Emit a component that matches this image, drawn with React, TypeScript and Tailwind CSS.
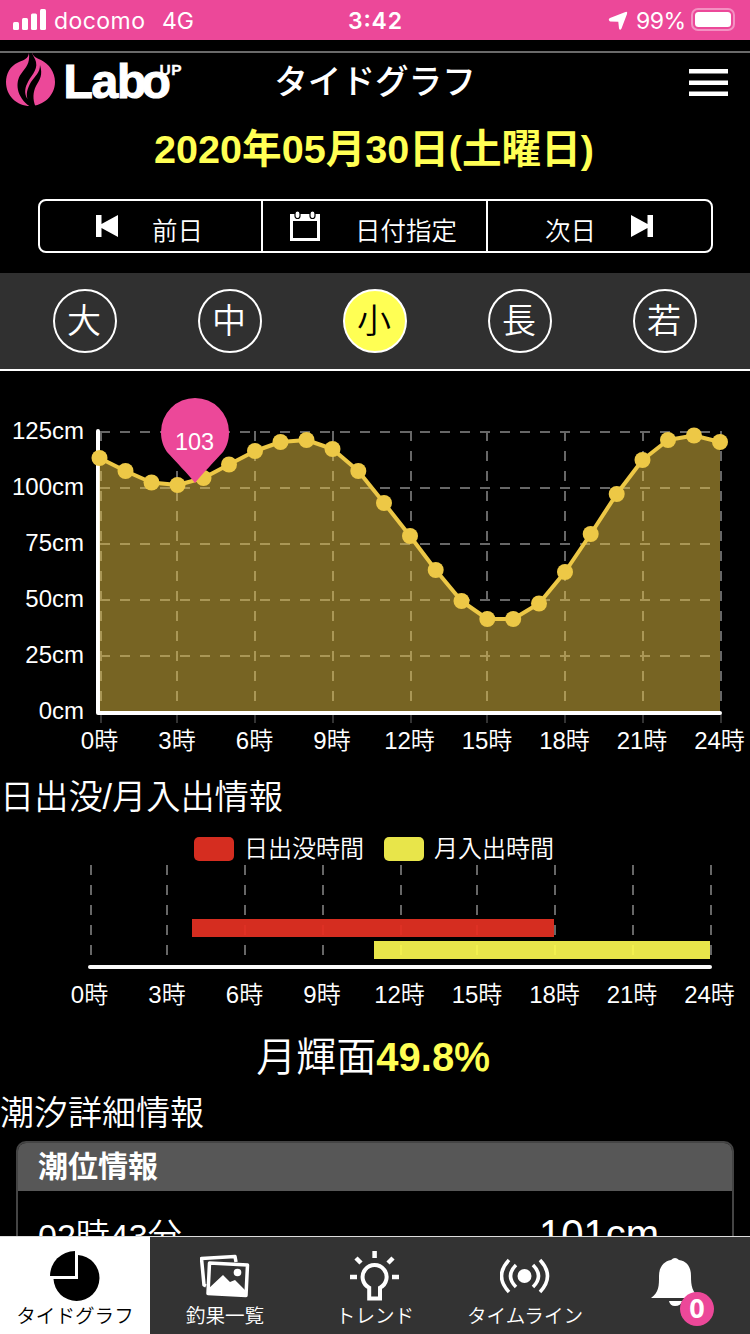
import React from "react";

const JP = "font-['Liberation_Sans','Noto_Sans_CJK_JP',sans-serif]";
const svgFont = "font-['Liberation_Sans','Noto_Sans_CJK_JP',sans-serif] font-[350]";

const tides: [number, number][] = [
  [99.5, 458], [125.5, 471], [151.5, 482.5], [177.5, 485], [203.5, 478], [229, 464.5], [255, 451], [280.5, 442], [306.5, 440],
  [332.5, 449], [358.3, 471], [384, 503], [410, 536], [435.7, 570], [461.5, 601], [487.3, 619], [513.2, 619],
  [539, 603.5], [565, 572], [590.7, 534], [616.7, 494], [642.5, 460], [668, 440], [694, 435.5], [720, 442],
];
const line = tides.map(([x, y]) => `${x},${y}`).join(" ");
const hours = [0, 3, 6, 9, 12, 15, 18, 21, 24];
const gridX = [101, 177, 255, 333, 411, 487, 565, 643, 721];
const gridX2 = [91, 167, 245, 323, 401, 477, 555, 633, 711];
const levels = [125, 100, 75, 50, 25, 0];

function StatusBar() {
  return (
    <div className="flex h-10 items-center bg-[#ec4899] px-[13px] font-['Inter','Roboto',sans-serif] text-white">
      <svg className="h-[22px] w-[33px]" viewBox="0 0 33 22" fill="white">
        <rect x="0" y="13" width="6" height="8" rx="1.5" />
        <rect x="9" y="9" width="6" height="12" rx="1.5" />
        <rect x="18" y="4.5" width="6" height="16.5" rx="1.5" />
        <rect x="27" y="0" width="6" height="21" rx="1.5" />
      </svg>
      <svg className="h-10 w-[691px]" viewBox="46 0 691 40" fill="white">
        <text x="54" y="28.5" fontSize="23" textLength="91">docomo</text>
        <text x="162" y="28.5" fontSize="23" textLength="32">4G</text>
        <text x="348" y="28.5" fontSize="23" fontWeight="600" textLength="54">3:42</text>
        <path d="M610 21.500Q607.500 19.500 610 18L624.800 12.200Q628 11 627 14L621.500 28.500Q620 31 619 28.500L618.300 21.800Z" />
        <text x="636" y="28.5" fontSize="23" textLength="50">99%</text>
        <rect x="692" y="9" width="42" height="21" rx="6" fill="none" stroke="white" strokeOpacity=".4" strokeWidth="2" />
        <rect x="695" y="12" width="36" height="15" rx="3.5" />
        <path d="M737 15v8q2-4 0-8" opacity=".5" />
      </svg>
    </div>
  );
}

function Header() {
  return (
    <header className="mt-[11px] flex h-[65px] items-start border-t-2 border-[#6a6a6a]">
      <svg className="h-[63px] w-[190px] shrink-0" viewBox="0 53 190 63">
        <path fill="#ec4899" d="M29 53C28 59 24 60 18 62.500C10 66 6 74 6 82C6 96 17 106 30 106C44 106 55 95 55 82C55 72 49 64 41 60C36 58 33 56 32 53Z" />
        <path d="M29 53C30 64 26 67 21 74C15 82 16 97 30 106.500H35.500C32.500 99 33 92 36 86C40 79 43 75 40 65C40 73 35 76 31 82C27 89 26 94 27.500 99C24 94 25 88 27 84C30 76 38 71 36 62C35 58 33 56 32 53Z" fill="black" />
        <g fill="white" stroke="white" className="font-['Liberation_Sans'] font-bold">
          <text x="63.5 91.5 117 141.5" y="98" fontSize="48" strokeWidth="1.2">Labo</text>
          <text x="159.5" y="74.5" fontSize="15.5" textLength="22" strokeWidth=".3">UP</text>
        </g>
      </svg>
      <h1 className="-mt-px w-[370px] text-center font-['Noto_Sans_CJK_JP',sans-serif] text-[33.6px] leading-[56px] font-medium">タイドグラフ</h1>
      <svg className="mt-4 ml-[129px] h-[28px] w-[39px]" viewBox="0 0 39 28" fill="white">
        <path d="M0 0h39v4.500H0zM0 11.500h39v4.500H0zM0 22.500h39v4.500H0z" />
      </svg>
    </header>
  );
}

function DayNav() {
  return (
    <nav className="mr-[37px] ml-[38px] mt-[23px] flex h-[54px] rounded-[8px] border-2 border-white text-[25.5px] font-[350]">
      <button className="flex w-[223px] shrink-0 items-center border-r-2 border-white pl-14">
        <svg className="h-[22px] w-[22px]" viewBox="0 0 22 22" fill="white"><path d="M0 0h5.500v9L22 0v22L5.500 13v9H0z" /></svg>
        <span className="ml-[34px] mt-[11px]">前日</span>
      </button>
      <button className="flex w-[225px] shrink-0 items-center border-r-2 border-white pl-[26px]">
        <svg className="h-[32px] w-[32px]" viewBox="0 0 32 32">
          <path fill="white" fillRule="evenodd" d="M1 4h30v27H1zM4 11v17h24V11z" />
          <g fill="white" stroke="black" strokeWidth="1.2"><rect x="6" y="1" width="5" height="7.5" rx="2.5" /><rect x="21" y="1" width="5" height="7.5" rx="2.5" /></g>
        </svg>
        <span className="ml-[34px] mt-[11px]">日付指定</span>
      </button>
      <button className="flex flex-1 items-center pl-[57px]">
        <span className="mt-[11px]">次日</span>
        <svg className="ml-[35px] h-[22px] w-[22px]" viewBox="0 0 22 22" fill="white"><path d="M0 0l16.500 9V0H22v22h-5.500v-9L0 22z" /></svg>
      </button>
    </nav>
  );
}

function TideTypes() {
  return (
    <div className="mt-5 flex h-[98px] items-start gap-[81px] border-b-2 border-white bg-[#303030] pt-4 pl-[53px]">
      {["大", "中", "小", "長", "若"].map((name) => (
        <div key={name} className={`flex h-16 w-16 items-center justify-center rounded-full border-2 border-white text-[34px] leading-[60px] font-[350] ${name === "小" ? "bg-[#ffff54] text-black" : "text-white"}`}>
          <span className="-ml-0.5">{name}</span>
        </div>
      ))}
    </div>
  );
}

function TideChart() {
  return (
    <svg className={`block h-[397px] w-[750px] ${svgFont}`} viewBox="0 371 750 397">
      <g stroke="#676767" strokeWidth="2">
        {levels.slice(0, 5).map((v, i) => <path key={v} d={`M100 ${432 + i * 56}H720`} strokeDasharray="10" />)}
        {gridX.map((x) => <path key={x} d={`M${x} 431V711`} strokeDasharray="10" />)}
        {gridX.map((x) => <path key={x} d={`M${x} 714V723`} stroke="#333" />)}
      </g>
      <path d="M98 431V713M98 713H720" stroke="white" strokeWidth="4" strokeLinecap="round" />
      <polygon points={`${line} 720,711 100,711`} fill="#edc846" fillOpacity=".5" />
      <polyline points={line} fill="none" stroke="#edc846" strokeWidth="4" strokeLinejoin="round" />
      {tides.map(([x, y]) => <circle key={x} cx={x} cy={y} r="8" fill="#edc846" />)}
      <path fill="#ec4899" d="M195 483C188 474 176 462 167 452C163 446 161 440 161 432A34 34 0 0 1 229 432C229 440 227 446 223 452C214 462 202 474 195 483Z" />
      <g fill="white" fontSize="24">
        <text x="194.5" y="450" textAnchor="middle" fontSize="23.5">103</text>
        {levels.map((v, i) => <text key={v} x="84" y={439 + i * 56} textAnchor="end">{v}cm</text>)}
        {hours.map((h, i) => <text key={h} x={99.5 + i * 77.5} y="749" textAnchor="middle">{h}時</text>)}
      </g>
    </svg>
  );
}

function SunMoonChart() {
  return (
    <svg className={`block h-[200px] w-[750px] ${svgFont}`} viewBox="0 825 750 200">
      <rect x="194" y="837" width="40" height="24" rx="5" fill="#d52d20" />
      <rect x="384" y="837" width="40" height="24" rx="5" fill="#e8e54a" />
      {gridX2.map((x) => <path key={x} d={`M${x} 865V955`} stroke="#676767" strokeWidth="2" strokeDasharray="10" />)}
      <path d="M90 967H710" stroke="#fafafa" strokeWidth="4" strokeLinecap="round" />
      <rect x="192" y="919" width="362" height="18" fill="#d52d20" />
      <rect x="374" y="941" width="336" height="18" fill="#e8e54a" />
      {gridX2.slice(2, 6).map((x) => <path key={x} d={`M${x} 925v10`} stroke="#de3024" strokeWidth="2" />)}
      {gridX2.slice(4, 8).map((x) => <path key={x} d={`M${x} 945v10`} stroke="#f2ef4e" strokeWidth="2" />)}
      <g fill="white" fontSize="24">
        <text x="244" y="857">日出没時間</text>
        <text x="434" y="857">月入出時間</text>
        {hours.map((h, i) => <text key={h} x={89.5 + i * 77.5} y="1003" textAnchor="middle">{h}時</text>)}
      </g>
    </svg>
  );
}

const PieIcon = () => (
  <svg className="h-[50px] w-[50px]" viewBox="0 0 50 50" fill="black"><path d="M25 0V25H0A25 25 0 0 1 25 0Z" /><path d="M28 4A23 23 0 1 1 3.500 28H28Z" /></svg>
);
const PhotosIcon = () => (
  <svg className="h-[50px] w-[50px]" viewBox="200 1251 50 50" fill="none" stroke="white" strokeWidth="3.5" strokeLinejoin="round">
    <path d="M206 1286L204 1285L201.500 1258.500L235 1256.500L236 1262" />
    <path d="M209.500 1263L247.500 1265L246 1295.500L208 1293.500Z" />
    <circle cx="237.5" cy="1272.5" r="3.8" fill="white" stroke="none" />
    <path fill="white" stroke="none" d="M208 1289L223 1275L230 1282L235 1280L246 1291V1295L208 1293Z" />
  </svg>
);
const BulbIcon = () => (
  <svg className="h-[50px] w-[50px]" viewBox="350 1251 50 50" fill="none" stroke="white" strokeWidth="4">
    <path d="M369.200 1298.500V1287.700A12 12 0 1 1 380 1287.700V1298.500Z" />
    <path d="M374.600 1251v7M350 1277h7M392 1277h7M356 1258l5 5M393 1258l-5 5" strokeWidth="4.5" />
  </svg>
);
const WaveIcon = () => (
  <svg className="h-[50px] w-[50px]" viewBox="500 1251 50 50" fill="none" stroke="white" strokeWidth="3.5">
    <circle cx="524.5" cy="1276" r="7" fill="white" stroke="none" />
    <path d="M509 1260Q494 1276 509 1292M516 1265Q505 1276 516 1287M540 1260Q555 1276 540 1292M533 1265Q544 1276 533 1287" />
  </svg>
);

const tabs = [
  { label: "タイドグラフ", icon: <PieIcon /> },
  { label: "釣果一覧", icon: <PhotosIcon /> },
  { label: "トレンド", icon: <BulbIcon /> },
  { label: "タイムライン", icon: <WaveIcon /> },
];

function TabBar() {
  return (
    <footer className="flex h-[98px] shrink-0 border-t border-[#ddd] bg-[#333]">
      {tabs.map((tab, i) => (
        <button key={tab.label} className={`flex w-[150px] flex-col items-center pt-[14px] ${i === 0 ? "bg-white text-black" : "text-white"}`}>
          {tab.icon}
          <span className="mt-px text-[19.6px] leading-7 font-[350] whitespace-nowrap">{tab.label}</span>
        </button>
      ))}
      <button className="flex w-[150px] items-start pt-[21px] pl-[51px]">
        <svg className="h-[70px] w-[64px]" viewBox="651 1258 64 70">
          <path fill="white" d="M651 1298C659 1292 659 1286 659 1276C659 1267 664 1261 671 1260Q675 1256 679 1260C687 1261 691 1267 691 1276C691 1286 692 1292 700 1298ZM669 1301H682Q681 1306 675 1306Q670 1306 669 1301Z" />
          <circle cx="697" cy="1309" r="17" fill="#ec4899" />
          <text x="697" y="1318" textAnchor="middle" fill="white" className="font-['Open_Sans'] text-[27px] font-bold">0</text>
        </svg>
      </button>
    </footer>
  );
}

export default function App() {
  return (
    <div className={`flex h-[1334px] w-[750px] flex-col overflow-hidden bg-black text-white ${JP}`}>
      <StatusBar />
      <main className="min-h-0 flex-1 overflow-hidden">
        <Header />
        <h2 className="mt-1 h-14 pr-0.5 text-center text-[39.6px] leading-[58px] font-bold text-[#ffff54]">2020年05月30日(土曜日)</h2>
        <DayNav />
        <TideTypes />
        <TideChart />
        <h3 className="h-[57px] text-[34.2px] leading-[58px] font-[350]">日出没/月入出情報</h3>
        <SunMoonChart />
        <p className="h-[62px] pr-1 text-center text-[40px] leading-[64px] font-[350]">月輝面<span className="font-bold text-[#ffff54]">49.8<span className="font-normal [-webkit-text-stroke:1px_#ffff54]">%</span></span></p>
        <h3 className="h-[54px] text-[34px] leading-[52px] font-[350]">潮汐詳細情報</h3>
        <section className="mx-4 h-[200px] rounded-t-[10px] border-2 border-[#444]">
          <h4 className="h-12 rounded-t-lg bg-[#575757] pl-5 text-[30px] leading-[48px] font-bold">潮位情報</h4>
          <div className="flex items-baseline justify-between pt-5 pr-[73px] pl-5 leading-[46px] font-[350]">
            <span className="text-[34px]">02時43分</span>
            <span className="text-[40px]">101cm</span>
          </div>
        </section>
      </main>
      <TabBar />
    </div>
  );
}
